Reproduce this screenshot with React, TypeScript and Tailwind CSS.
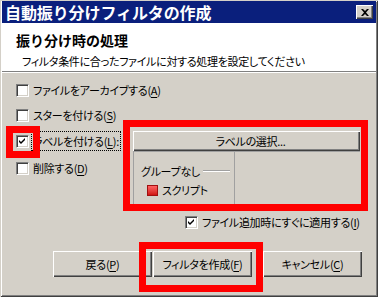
import { ReactNode } from "react";

const font = "font-['Noto_Sans_CJK_JP','Noto_Sans',sans-serif]";
const palt = "[font-feature-settings:'palt'] tracking-[-0.3px]";

const Accel = ({ k }: { k: string }) => (
  <span>
    (<span className="underline underline-offset-2">{k}</span>)
  </span>
);

const CheckBox = ({ checked = false }: { checked?: boolean }) => (
  <div className="w-[13px] h-[13px] shrink-0 bg-white border border-t-[#808080] border-l-[#808080] border-r-white border-b-white shadow-[inset_1px_1px_0_#404040,inset_-1px_-1px_0_#d4d0c8] flex items-center justify-center">
    {checked && (
      <svg width="7" height="7" viewBox="0 0 7 7">
        <path d="M0 2 L2 4 L6 0 L6 2 L2 6 L0 4 Z" fill="#000" />
      </svg>
    )}
  </div>
);

const CheckRow = ({ checked, children, focus }: { checked?: boolean; children: ReactNode; focus?: boolean }) => (
  <div className="flex items-center gap-[3px] h-[20px] whitespace-nowrap">
    <CheckBox checked={checked} />
    <span className={`px-[1px] leading-[18px] ${focus ? "outline outline-1 outline-dotted outline-black" : ""}`}>{children}</span>
  </div>
);

const Button = ({ children, className = "" }: { children: ReactNode; className?: string }) => (
  <div className={`h-[26px] flex items-center justify-center whitespace-nowrap bg-[#d4d0c8] shadow-[inset_1px_1px_0_#ffffff,inset_-1px_-1px_0_#404040,inset_-2px_-2px_0_#808080] ${className}`}>
    {children}
  </div>
);

export default function App() {
  return (
    <div className={`relative w-[379px] h-[298px] overflow-hidden bg-white ${font} text-[11px] text-black`}>
      <div className="w-[378px] h-[297px] bg-[#d4d0c8] shadow-[inset_1px_1px_0_#d4d0c8,inset_-1px_-1px_0_#404040,inset_2px_2px_0_#ffffff,inset_-2px_-2px_0_#808080] p-[2px] flex flex-col">
        {/* title bar */}
        <div className="h-[22px] mt-[-1px] bg-[#0a1f7c] flex items-center justify-between pl-[3px] pr-[3px]">
          <span className="text-white font-bold text-[16px] leading-none whitespace-nowrap tracking-[-0.1px]">自動振り分けフィルタの作成</span>
          <div className="w-[17px] h-[14px] bg-[#d4d0c8] shadow-[inset_1px_1px_0_#ffffff,inset_-1px_-1px_0_#404040,inset_-2px_-2px_0_#808080] flex items-center justify-center">
            <svg width="8" height="7" viewBox="0 0 8 7">
              <path d="M0 0h2l2 2 2-2h2L5 3.5 8 7H6L4 5 2 7H0l3-3.5z" fill="#000" />
            </svg>
          </div>
        </div>

        {/* header */}
        <div className="h-[49px] bg-white pl-[14px] pt-[8px] border-b border-[#808080] shadow-[0_1px_0_#ffffff] whitespace-nowrap">
          <div className="font-bold text-[14px] leading-[18px]">振り分け時の処理</div>
          <div className={`pl-[6px] mt-[5px] leading-[14px] ${palt}`}>フィルタ条件に合ったファイルに対する処理を設定してください</div>
        </div>

        {/* body */}
        <div className={`flex-1 pl-[14px] pt-[8px] ${palt}`}>
          <div className="flex">
            <div className="flex flex-col gap-[5px] w-[117px]">
              <CheckRow>ファイルをアーカイブする<Accel k="A" /></CheckRow>
              <CheckRow>スターを付ける<Accel k="S" /></CheckRow>
              <div className="mt-[1px]">
                <CheckRow checked focus>ラベルを付ける<Accel k="L" />:</CheckRow>
              </div>
              <div className="mt-[2px]">
                <CheckRow>削除する<Accel k="D" /></CheckRow>
              </div>
            </div>
            <div className="mt-[51px] w-[227px] flex flex-col">
              <Button className="h-[20px]! pl-[8px]">ラベルの選択...</Button>
              <div className="h-[55px] flex border-l border-t border-[#a0a0a0]">
                <div className="w-[101px] border-r border-[#a0a0a0] pl-[7px] pt-[12px] flex flex-col gap-[5px] whitespace-nowrap">
                  <div className="flex items-center gap-[3px] leading-[14px]">
                    <span>グループなし</span>
                    <span className="w-[27px] h-[1px] bg-white shadow-[0_-1px_0_#a0a0a0]" />
                  </div>
                  <div className="flex items-center gap-[4px] pl-[6px] leading-[14px]">
                    <span className="w-[11px] h-[11px] border border-[#a01010] bg-gradient-to-b from-[#ff6060] to-[#d01010]" />
                    <span>スクリプト</span>
                  </div>
                </div>
              </div>
            </div>
          </div>

          <div className="ml-[169px] mt-[6px]">
            <CheckRow checked>ファイル追加時にすぐに適用する<Accel k="I" /></CheckRow>
          </div>

          <div className="flex mt-[19px] ml-[37px]">
            <Button className="w-[99px]">戻る<Accel k="P" /></Button>
            <Button className="w-[99px] ml-[1px]">フィルタを作成<Accel k="F" /></Button>
            <Button className="w-[99px] ml-[11px]">キャンセル<Accel k="C" /></Button>
          </div>
        </div>
      </div>

      {/* red annotation boxes */}
      <div className="absolute left-[6px] top-[126px] w-[34px] h-[32px] border-[7px] border-[#ff0000]" />
      <div className="absolute left-[123px] top-[120px] w-[245px] h-[91px] border-[7px] border-[#ff0000]" />
      <div className="absolute left-[139px] top-[242px] w-[124px] h-[50px] border-[7px] border-[#ff0000]" />
    </div>
  );
}
